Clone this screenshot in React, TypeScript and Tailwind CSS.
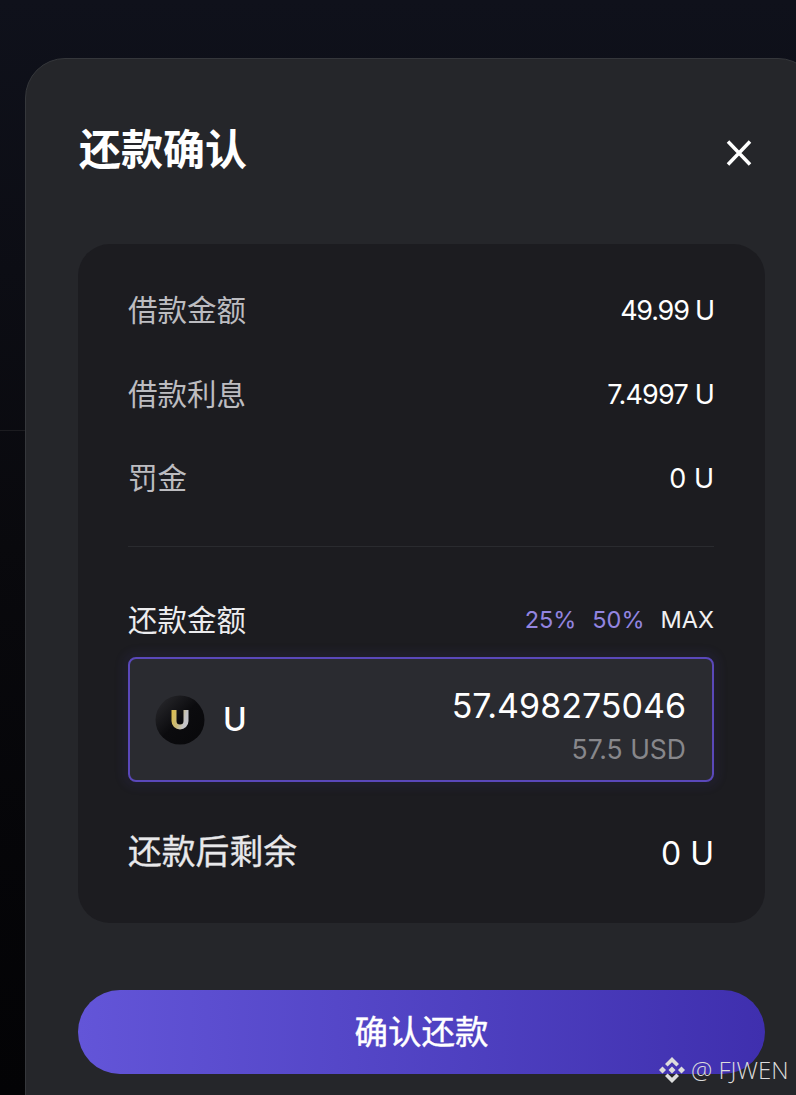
const sans = "font-['Inter','Noto_Sans_CJK_SC',sans-serif]";

const rows = [
  { label: "借款金额", value: "49.99 U", tight: "tracking-[-1.2px]" },
  { label: "借款利息", value: "7.4997 U", tight: "tracking-[-0.8px]" },
  { label: "罚金", value: "0 U", tight: "tracking-[0px]" },
];

function TokenIcon() {
  return (
    <svg width="50" height="50" viewBox="0 0 50 50" className="shrink-0">
      <defs>
        <linearGradient id="disc" x1="0" y1="0" x2="1" y2="1">
          <stop offset="0" stopColor="#2c2c30" />
          <stop offset="0.5" stopColor="#0b0b0e" />
          <stop offset="1" stopColor="#08080a" />
        </linearGradient>
        <linearGradient id="letter" x1="0" y1="0" x2="1" y2="0.4">
          <stop offset="0" stopColor="#d9bd55" />
          <stop offset="0.5" stopColor="#c8b97c" />
          <stop offset="1" stopColor="#c4c4c8" />
        </linearGradient>
      </defs>
      <circle cx="25" cy="25" r="24.5" fill="url(#disc)" />
      <path d="M19 15v11a6 6 0 0 0 12 0V15" fill="none" stroke="url(#letter)" strokeWidth="5" />
    </svg>
  );
}

function BinanceMark() {
  return (
    <svg width="28" height="28" viewBox="0 0 28 28" className="shrink-0" fill="#dcdcdc">
      <path d="M14 1l7 7-2.600 2.600L14 6.200 9.600 10.600 7 8z" />
      <path d="M14 27l-7-7 2.600-2.600L14 21.800l4.400-4.400L21 20z" />
      <path d="M4.500 10.500L8 14l-3.500 3.500L1 14z" />
      <path d="M23.500 10.500L27 14l-3.500 3.500L20 14z" />
      <path d="M14 10.500l3.500 3.500-3.500 3.500-3.500-3.500z" />
    </svg>
  );
}

export default function App() {
  return (
    <div className={`relative flex h-[1095px] w-[796px] overflow-hidden bg-gradient-to-b from-[#0f111b] via-[#09090d] to-[#030305] ${sans}`}>
      {/* page behind the dialog */}
      <div className="h-[431px] w-[25px] shrink-0 border-b border-[#1c1c20]" />

      {/* dialog */}
      <div className="mt-[58px] h-[1100px] w-[793px] shrink-0 rounded-[40px] border border-[#35373b] bg-[#25262a] px-[52px]">
        <div className="flex h-[185px] items-start justify-between pt-[61px]">
          <h1 className="ml-[1px] text-[42px] leading-[60px] font-bold text-white">还款确认</h1>
          <svg width="26" height="26" viewBox="0 0 26 26" className="mt-[20px] mr-[13px]" fill="none" stroke="#fff" strokeWidth="3.500">
            <path d="M2 1.500l22 23M24 1.500l-22 23" />
          </svg>
        </div>

        <div className="w-[687px] rounded-[32px] bg-[#1c1c20] pt-[45px] pr-[51px] pl-[50px]">
          <div className="flex flex-col gap-[42px] border-b border-[#2a2b2f] pb-[47px]">
            {rows.map((row) => (
              <div key={row.label} className="flex h-[42px] items-center justify-between">
                <span className="text-[29.500px] text-[#bcbcc0]">{row.label}</span>
                <span className={`pt-[3px] text-[27px] text-white ${row.tight}`}>{row.value}</span>
              </div>
            ))}
          </div>

          <div className="mt-[51px] flex h-[44px] items-center justify-between">
            <span className="text-[29.500px] text-[#ececee]">还款金额</span>
            <div className="flex items-center gap-[16px] text-[23.500px]">
              <span className="text-[#9385e0]">25%</span>
              <span className="text-[#9385e0]">50%</span>
              <span className="text-[#f0f0f2]">MAX</span>
            </div>
          </div>

          <div className="mt-[15px] flex h-[125px] items-center justify-between rounded-[8px] border-2 border-[#5a48ba] bg-[#2a2b30] pr-[26px] pl-[25px] shadow-[0_0_8px_6px_rgba(72,60,150,0.1)]">
            <div className="flex items-center gap-[18px]">
              <TokenIcon />
              <span className="text-[32px] font-medium text-white">U</span>
            </div>
            <div className="flex flex-col items-end pt-[9px]">
              <span className="text-[34px] leading-[46px] text-white">57.498275046</span>
              <span className="mt-[3px] text-[26.500px] leading-[34px] text-[#87878b]">57.5 USD</span>
            </div>
          </div>

          <div className="flex h-[141px] items-center justify-between">
            <span className="text-[33.800px] text-[#e8e8ea] [-webkit-text-stroke:0.3px_#e8e8ea]">还款后剩余</span>
            <span className="pt-[2px] text-[32px] text-white">0 U</span>
          </div>
        </div>

        <button className="mt-[67px] flex h-[84px] w-[687px] items-center justify-center rounded-[42px] bg-gradient-to-r from-[#6355d8] to-[#3f2fae] text-[33.500px] text-white [-webkit-text-stroke:0.4px_#ffffff]">
          确认还款
        </button>
      </div>

      {/* watermark */}
      <div className="absolute top-[1052px] left-[658px] flex items-center gap-[5px] font-['Open_Sans',sans-serif] text-[24px] font-light text-[#dcdcdc]">
        <BinanceMark />
        <span>@ FJWEN</span>
      </div>
    </div>
  );
}
